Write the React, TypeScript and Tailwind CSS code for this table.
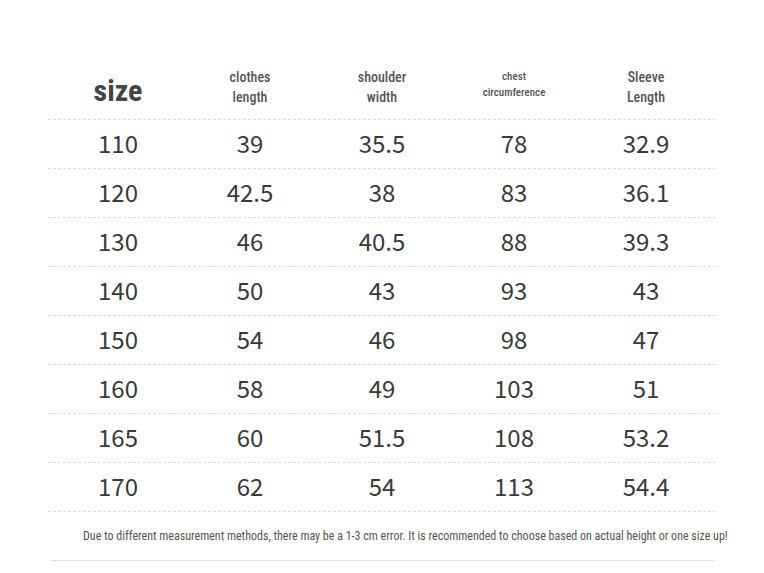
import React from "react";

const rows: string[][] = [
  ["110", "39", "35.5", "78", "32.9"],
  ["120", "42.5", "38", "83", "36.1"],
  ["130", "46", "40.5", "88", "39.3"],
  ["140", "50", "43", "93", "43"],
  ["150", "54", "46", "98", "47"],
  ["160", "58", "49", "103", "51"],
  ["165", "60", "51.5", "108", "53.2"],
  ["170", "62", "54", "113", "54.4"],
];

const cond = '"Roboto Condensed", "Liberation Sans Narrow", "DejaVu Sans", sans-serif';

export default function App() {
  return (
    <div className="w-[764px] h-[573px] bg-white overflow-hidden pt-[60px]">
      <div className="ml-[48px] w-[668px]">
        <div
          className="grid grid-cols-5 px-[4px] h-[60px] items-center border-b border-dashed border-[#dcdcdc] text-[#555]"
          style={{ fontFamily: cond }}
        >
          <div className="text-center text-[30px] font-bold text-[#444] font-stretch-condensed leading-none pt-[2px]">size</div>
          <div className="text-center text-[14px] font-medium leading-[20px] font-stretch-condensed pb-[6px]">clothes<br />length</div>
          <div className="text-center text-[14px] font-medium leading-[20px] font-stretch-condensed pb-[6px]">shoulder<br />width</div>
          <div className="text-center text-[11px] font-medium leading-[16px] font-stretch-condensed pb-[10px]">chest<br />circumference</div>
          <div className="text-center text-[14px] font-medium leading-[20px] font-stretch-condensed pb-[6px]">Sleeve<br />Length</div>
        </div>
        {rows.map((r, i) => (
          <div
            key={i}
            className="grid grid-cols-5 px-[4px] h-[49px] items-center border-b border-dashed border-[#dcdcdc] text-[#3a3a3a] text-[24px] pb-[3px]"
            style={{ fontFamily: '"Noto Sans CJK SC", "Noto Sans", sans-serif' }}
          >
            {r.map((c, j) => (
              <div key={j} className="text-center leading-none">{c}</div>
            ))}
          </div>
        ))}
        <div className="h-[49px] flex items-center border-b border-[#e0e0e0] mx-[2px]">
          <div
            className="pl-[33px] whitespace-nowrap text-[12px] text-[#555] font-stretch-condensed"
            style={{ fontFamily: cond }}
          >
            Due to different measurement methods, there may be a 1-3 cm error. It is recommended to choose based on actual height or one size up!
          </div>
        </div>
      </div>
    </div>
  );
}
